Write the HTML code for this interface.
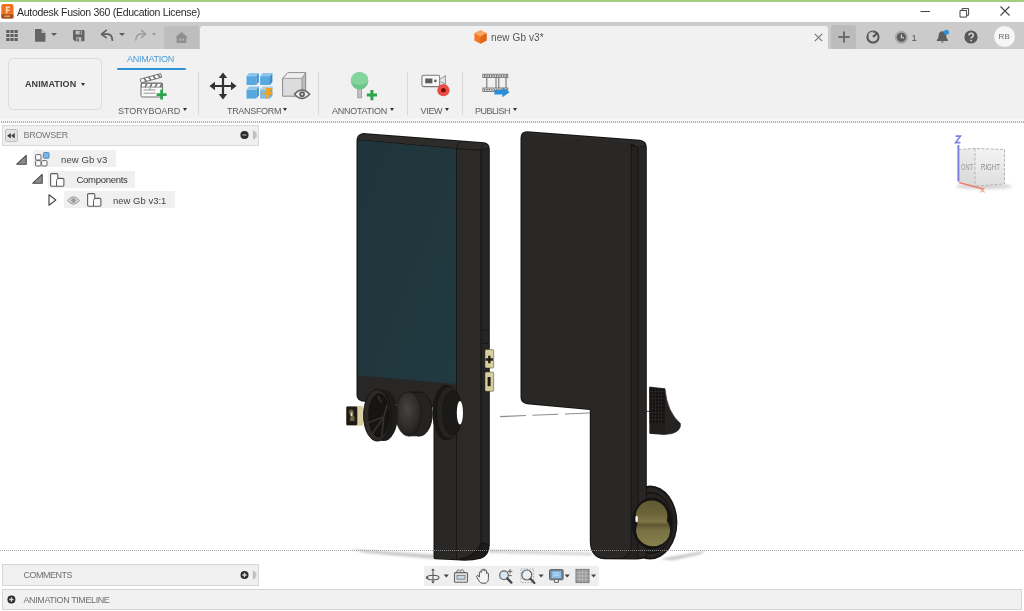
<!DOCTYPE html>
<html>
<head>
<meta charset="utf-8">
<title>Autodesk Fusion 360</title>
<style>
*{box-sizing:border-box;margin:0;padding:0}
html,body{width:1024px;height:611px;overflow:hidden;background:#fff;font-family:"Liberation Sans",sans-serif;}
#app{position:relative;width:1024px;height:611px;background:#fff;overflow:hidden}
.abs{position:absolute}
.t{position:absolute;white-space:nowrap;line-height:1;transform-origin:0 0;filter:blur(0.3px)}
svg{position:absolute;overflow:visible}
svg:not(#model){filter:blur(0.300px)}
#green{left:0;top:0;width:1024px;height:2px;background:#a3ce80}
#title{left:0;top:2px;width:1024px;height:20px;background:#fff}
#qat{left:0;top:21.600px;width:1024px;height:27.400px;background:#cbcbcb}
#tab{left:200.300px;top:25.500px;width:628.200px;height:23.500px;background:#f1f1f1;border-radius:3px 3px 0 0}
#home{left:163.600px;top:25.600px;width:35.800px;height:23.400px;background:#bebebe;border-radius:3px 3px 0 0}
#plus{left:830.600px;top:25.200px;width:25.600px;height:23.800px;background:#bcbcbc;border-radius:3px}
#ribbon{left:0;top:49px;width:1024px;height:69px;background:#f1f1f1}
#ribbon2{left:0;top:118px;width:1024px;height:6px;background:linear-gradient(#f3f3f3,#fafafa 3px,#fff 6px)}
#dots1{left:1px;top:120.900px;width:1023px;height:2.500px;background:repeating-linear-gradient(90deg,#b2b2b2 0 1px,#f7f7f7 1px 2px)}
#dots2{left:0;top:550.3px;width:1024px;height:1px;background:repeating-linear-gradient(90deg,rgba(150,150,150,.85) 0 1px,rgba(255,255,255,0) 1px 2px)}
#wsbtn{left:8px;top:58px;width:94px;height:52px;border:1px solid #dcdcdc;border-radius:5px;background:#f1f1f1}
.sep{position:absolute;top:72px;width:1px;height:43px;background:#d8d8d8}
.lbl{font-size:9px;color:#5c5c5c}
.car{position:absolute;width:0;height:0;border-left:2.700px solid transparent;border-right:2.700px solid transparent;border-top:3.200px solid #2e2e2e;margin:-0.400px 0 0 -0.200px}
.carq{position:absolute;width:0;height:0;border-left:3px solid transparent;border-right:3px solid transparent;border-top:3.6px solid #5a5a5a}
#bhead{left:2px;top:125px;width:257px;height:21px;background:#f0f0f0;border:1px solid #d9d9d9}
.chip{position:absolute;background:#f0f0f0;height:17px}
.tree{font-size:9.5px;color:#454545}
#bottom{left:0;top:588px;width:1024px;height:23px;background:#fff}
#comments{left:2px;top:564px;width:257px;height:22px;background:#f0f0f0;border:1px solid #d6d6d6}
#timeline{left:2px;top:589.400px;width:1019.800px;height:21.100px;background:#f1f1f1;border:1px solid #d4d4d4}
#nav{left:424px;top:566px;width:175px;height:20px;background:#efefef}
.pl{font-size:9px;color:#707070}
</style>
</head>
<body>
<div id="app">
  <div class="abs" id="green"></div>
  <div class="abs" id="title"></div>
  <div class="abs" id="qat"></div>
  <div class="abs" id="tab"></div>
  <div class="abs" id="home"></div>
  <div class="abs" id="plus"></div>
  <div class="abs" id="ribbon"></div>
  <div class="abs" id="ribbon2"></div>
  <div class="abs" id="dots1"></div>

  <!-- title text -->
  <div class="t" id="ttext" style="letter-spacing:-0.29px;left:17px;top:7.400px;font-size:10.5px;color:#2a2a2a">Autodesk Fusion 360 (Education License)</div>
  <div class="t" id="doc" style="letter-spacing:0.1px;left:491px;top:33px;font-size:10px;color:#555">new Gb v3*</div>
  <!-- app icon -->
  <svg style="left:1px;top:4px" width="13" height="15" viewBox="0 0 13 15">
    <rect x="0.3" y="0" width="12.2" height="14.5" rx="2" fill="#f26f21"/>
    <rect x="0.3" y="10.3" width="12.2" height="4.2" rx="1.2" fill="#a9511e"/>
    <path d="M4.8 2.5h4v1.4h-2.4v1.6h2v1.4h-2v2.3h-1.6z" fill="#ffd9b8"/>
    <rect x="3.5" y="11.6" width="5.5" height="1.2" fill="#e8b48e"/>
  </svg>
  <!-- grid -->
  <svg style="left:6px;top:30px" width="12" height="11" viewBox="0 0 12 11" fill="#5f5f5f">
    <rect x="0.3" y="0" width="3.2" height="3"/><rect x="4.4" y="0" width="3.2" height="3"/><rect x="8.5" y="0" width="3.2" height="3"/>
    <rect x="0.3" y="4" width="3.2" height="3"/><rect x="4.4" y="4" width="3.2" height="3"/><rect x="8.5" y="4" width="3.2" height="3"/>
    <rect x="0.3" y="8" width="3.2" height="3"/><rect x="4.4" y="8" width="3.2" height="3"/><rect x="8.5" y="8" width="3.2" height="3"/>
  </svg>
  <!-- file -->
  <svg style="left:35px;top:29px" width="11" height="13" viewBox="0 0 11 13">
    <path d="M0 0h6.4l4 4v8.8h-10.4z" fill="#656565"/><path d="M6.6 0.3v3.6h3.6z" fill="#bdbdbd"/>
  </svg>
  <div class="carq" style="left:50.8px;top:33.4px"></div>
  <!-- save -->
  <svg style="left:73.4px;top:29.8px" width="12" height="12" viewBox="0 0 12 12">
    <path d="M0 1q0-1 1-1h9.5q1 0 1 1v9.3q0 1-1 1h-8.5l-2-2z" fill="#636363"/>
    <rect x="2.6" y="0.8" width="6.2" height="3.6" fill="#c2c2c2"/>
    <rect x="6.6" y="1.3" width="1.4" height="2.5" fill="#636363"/>
    <rect x="3.3" y="7.3" width="5" height="4" fill="#c2c2c2"/>
    <rect x="4.2" y="8.3" width="1.6" height="3" fill="#636363"/>
  </svg>
  <!-- undo -->
  <svg style="left:101px;top:30px" width="13" height="11" viewBox="0 0 13 11">
    <path d="M5.2 0.4L0.6 4.2l4.6 3.4" fill="none" stroke="#616161" stroke-width="1.7" stroke-linejoin="round" stroke-linecap="round"/>
    <path d="M1.4 4.2h5.4q4.2 0.2 4.6 6" fill="none" stroke="#616161" stroke-width="1.8" stroke-linecap="round"/>
  </svg>
  <div class="carq" style="left:118.5px;top:33.2px"></div>
  <!-- redo -->
  <svg style="left:135px;top:30px" width="12" height="11" viewBox="0 0 12 11">
    <path d="M6.6 0.4l4.2 3.6l-4.2 3.4" fill="none" stroke="#9c9c9c" stroke-width="1.4" stroke-linejoin="round" stroke-linecap="round"/>
    <path d="M10.2 4h-5q-4 0.4-4.4 6" fill="none" stroke="#9c9c9c" stroke-width="1.4" stroke-linecap="round"/>
  </svg>
  <div class="carq" style="left:152px;top:33.2px;border-top-color:#9a9a9a;border-left-width:2.6px;border-right-width:2.6px"></div>
  <!-- home -->
  <svg style="left:174.5px;top:32px" width="13" height="11" viewBox="0 0 13 11">
    <path d="M6.5 0L13 5.4h-1.6v5.6h-9.8v-5.6h-1.6z" fill="#8f8f8f"/>
    <rect x="4" y="6.6" width="2" height="2" fill="#b5b5b5"/><rect x="7" y="6.6" width="2" height="2" fill="#b5b5b5"/>
  </svg>
  <!-- doc cube -->
  <svg style="left:473.5px;top:30px" width="13" height="14" viewBox="0 0 13 14">
    <path d="M6.5 0.2L12.6 3.2v7.2L6.5 13.8L0.4 10.4V3.2z" fill="#f07a22"/>
    <path d="M6.5 0.2L12.6 3.2L6.5 6.4L0.4 3.2z" fill="#f9a566"/>
    <path d="M6.5 6.4L12.6 3.2v7.2L6.5 13.8z" fill="#e0661a"/>
  </svg>
  <!-- tab close -->
  <svg style="left:814.300px;top:32.900px" width="9" height="9" viewBox="0 0 9 9"><path d="M0.8 0.8l7.4 7.4M8.2 0.8l-7.4 7.4" stroke="#7a7a7a" stroke-width="1.2"/></svg>
  <!-- plus -->
  <svg style="left:837.900px;top:30.800px" width="12" height="12" viewBox="0 0 12 12"><path d="M6 0.400v11.200M0.400 6h11.200" stroke="#6c6c6c" stroke-width="2"/></svg>
  <!-- extensions -->
  <svg style="left:866px;top:30px" width="14" height="14" viewBox="0 0 14 14">
    <circle cx="7" cy="7" r="5.6" fill="none" stroke="#555" stroke-width="2"/>
    <path d="M7 7L11 3.2" stroke="#555" stroke-width="2.2"/><path d="M2.4 4.6q2-2.6 4.6-2.6" stroke="#ccc" stroke-width="1.2" fill="none"/>
  </svg>
  <!-- job status -->
  <svg style="left:894px;top:30px" width="15" height="15" viewBox="0 0 15 15">
    <circle cx="7.4" cy="7.3" r="6.6" fill="#a9a9a9"/><circle cx="7.4" cy="7.3" r="4.6" fill="#5d5d5d"/>
    <path d="M7.4 4.4v3.2h2.6" stroke="#c8c8c8" stroke-width="1.2" fill="none"/>
  </svg>
  <div class="t" style="left:911.5px;top:33px;font-size:9.5px;color:#555">1</div>
  <!-- bell -->
  <svg style="left:936px;top:29px" width="14" height="15" viewBox="0 0 14 15">
    <path d="M6.4 2.2q3.6 0.2 3.8 4.4q0 3 1.8 4.4v1h-11.2v-1q1.8-1.4 1.8-4.4q0.2-4.2 3.8-4.4z" fill="#5e5e5e"/>
    <path d="M5 12.6q1.4 2.4 2.8 0z" fill="#5e5e5e"/>
    <circle cx="10.4" cy="3.2" r="2.5" fill="#2d8fd8"/>
  </svg>
  <!-- help -->
  <svg style="left:964px;top:30px" width="14" height="14" viewBox="0 0 14 14">
    <circle cx="7" cy="7" r="6.6" fill="#585858"/>
    <path d="M4.8 5.4q0.2-2.2 2.3-2.2t2.2 2q0 1.2-1.1 1.8t-1.1 1.6" stroke="#d2d2d2" stroke-width="1.5" fill="none"/><circle cx="7.1" cy="10.6" r="0.95" fill="#d2d2d2"/>
  </svg>
  <!-- avatar -->
  <div class="abs" style="left:993.5px;top:26px;width:21px;height:21px;border-radius:50%;background:#f6f6f6"></div>
  <div class="t" style="left:998.4px;top:33px;font-size:8px;color:#6a6a6a;letter-spacing:0.3px">RB</div>
  <!-- window controls -->
  <svg style="left:919px;top:5px" width="95" height="14" viewBox="0 0 95 14">
    <path d="M1.5 6.5h9.5" stroke="#444" stroke-width="1"/>
    <path d="M41 5.5h6.6v6.6h-6.6z M43 5.4v-1.8h6.6v6.6h-1.9" stroke="#444" stroke-width="1" fill="none"/>
    <path d="M81.5 1.5l9 9M90.5 1.5l-9 9" stroke="#444" stroke-width="1.1"/>
  </svg>
<!--ICONS_TOP_END-->
  <!-- ribbon -->
  <div class="abs" id="wsbtn"></div>
  <div class="t" id="ws" style="letter-spacing:0.1px;left:25px;top:80px;font-size:9px;font-weight:bold;color:#3c3c3c">ANIMATION</div>
  <div class="car" style="left:81.5px;top:83px"></div>
  <div class="t" id="tabl" style="letter-spacing:-0.25px;left:127px;top:54.5px;font-size:9px;color:#4a9bd8">ANIMATION</div>
  <div class="abs" style="left:117px;top:67.6px;width:69px;height:2.8px;background:#2b93d4;border-radius:1px"></div>
  <div class="t lbl" id="l1" style="letter-spacing:-0.05px;left:118px;top:106.5px">STORYBOARD</div><div class="car" style="left:183px;top:108.7px"></div>
  <div class="t lbl" id="l2" style="letter-spacing:-0.32px;left:227px;top:106.5px">TRANSFORM</div><div class="car" style="left:283.3px;top:108.7px"></div>
  <div class="t lbl" id="l3" style="letter-spacing:-0.26px;left:332px;top:106.5px">ANNOTATION</div><div class="car" style="left:390.3px;top:108.7px"></div>
  <div class="t lbl" id="l4" style="letter-spacing:-0.3px;left:420.5px;top:106.5px">VIEW</div><div class="car" style="left:445.5px;top:108.7px"></div>
  <div class="t lbl" id="l5" style="letter-spacing:-0.5px;left:475px;top:106.5px">PUBLISH</div><div class="car" style="left:512.7px;top:108.7px"></div>
  <div class="sep" style="left:198px"></div>
  <div class="sep" style="left:317.5px"></div>
  <div class="sep" style="left:406.5px"></div>
  <div class="sep" style="left:461.6px"></div>
  <!-- storyboard clapper -->
  <svg style="left:139px;top:73px" width="26" height="26" viewBox="0 0 26 26">
    <path d="M1.2 6.2L21.5 0.6l1.2 3.6L2.4 9.8z" fill="#fff" stroke="#6f6f6f" stroke-width="1"/>
    <path d="M5 5.2l2.4 3.2M9.6 3.9l2.4 3.2M14.2 2.7l2.4 3.2M18.8 1.4l2.4 3.2" stroke="#6f6f6f" stroke-width="1.6"/>
    <rect x="2" y="10" width="21.5" height="14" rx="1.2" fill="#fafafa" stroke="#6f6f6f" stroke-width="1"/>
    <rect x="2.5" y="10.5" width="20.5" height="3.6" fill="#fff" stroke="#6f6f6f" stroke-width="0.8"/>
    <path d="M6 14l2-3.4M11 14l2-3.4M16 14l2-3.4M21 14l2-3.4" stroke="#6f6f6f" stroke-width="1.5"/>
    <path d="M4.5 17h12M4.5 20.2h12M11 15v2" stroke="#8a8a8a" stroke-width="0.9"/>
    <path d="M22.6 16.6v10M17.6 21.6h10" stroke="#2ea350" stroke-width="2.8"/>
  </svg>
  <!-- move -->
  <svg style="left:209px;top:72px" width="28" height="28" viewBox="0 0 28 28">
    <path d="M14 3v22M3 14h22" stroke="#333" stroke-width="2.2"/>
    <path d="M14 0.4l4.2 5.6h-8.4zM14 27.6l4.2-5.6h-8.4zM0.4 14l5.6-4.2v8.4zM27.6 14l-5.6-4.2v8.4z" fill="#333"/>
  </svg>
  <!-- blue cubes -->
  <svg style="left:245.5px;top:72px" width="28" height="28" viewBox="0 0 28 28">
    <g transform="translate(0 0)">
      <path d="M0.5 4.2L3 1h9.8l-2.4 3.2z" fill="#8cc6ec"/>
      <path d="M10.4 4.2L12.8 1v9l-2.4 3z" fill="#3a8fcb"/>
      <rect x="0.5" y="4.2" width="9.9" height="8.8" fill="#56a8de"/>
    </g>
    <g transform="translate(13.6 0)">
      <path d="M0.5 4.2L3 1h9.8l-2.4 3.2z" fill="#8cc6ec"/>
      <path d="M10.4 4.2L12.8 1v9l-2.4 3z" fill="#3a8fcb"/>
      <rect x="0.5" y="4.2" width="9.9" height="8.8" fill="#56a8de"/>
    </g>
    <g transform="translate(0 13.6)">
      <path d="M0.5 4.2L3 1h9.8l-2.4 3.2z" fill="#8cc6ec"/>
      <path d="M10.4 4.2L12.8 1v9l-2.4 3z" fill="#3a8fcb"/>
      <rect x="0.5" y="4.2" width="9.9" height="8.8" fill="#56a8de"/>
    </g>
    <g transform="translate(13.6 13.6)" opacity="0.75">
      <path d="M0.5 4.2L3 1h9.8l-2.4 3.2z" fill="#8cc6ec"/>
      <path d="M10.4 4.2L12.8 1v9l-2.4 3z" fill="#3a8fcb"/>
      <rect x="0.5" y="4.2" width="9.9" height="8.8" fill="#56a8de"/>
    </g>
    <path d="M15 21.5l5.5-1.5l-1-4.6l7.6 1.2l-3.2 2.8l3.4 1.2l-7.8 6.6l0.9-4.6z" fill="#f4a31f"/>
  </svg>
  <!-- gray cube with eye -->
  <svg style="left:282px;top:72px" width="29" height="28" viewBox="0 0 29 28">
    <path d="M0.6 6.4L6 0.6h17.6v18l-3.6 5.6H0.6z" fill="#dcdcdc" stroke="#8a8a8a" stroke-width="1"/>
    <path d="M20 6.4L23.6 0.6v18L20 24.2z" fill="#bdbdbd" stroke="#8a8a8a" stroke-width="0.8"/>
    <path d="M0.6 6.4L6 0.6h17.6L20 6.4z" fill="#eee" stroke="#8a8a8a" stroke-width="0.8"/>
    <path d="M12.6 22.2q7-8.4 15 0q-8 8.4-15 0z" fill="#f0f0f0" stroke="#666" stroke-width="1.6"/>
    <circle cx="20.1" cy="22.2" r="2.9" fill="#666"/><circle cx="20.1" cy="22.2" r="1" fill="#eee"/>
  </svg>
  <!-- annotation pin -->
  <svg style="left:349px;top:71px" width="30" height="30" viewBox="0 0 30 30">
    <rect x="8.8" y="17" width="3.6" height="9.8" fill="#c4c4c4" stroke="#8e8e8e" stroke-width="0.8"/>
    <circle cx="10.6" cy="9.8" r="8.8" fill="#6ec68c"/>
    <path d="M1.8 9.8a8.8 8.8 0 0 1 17.6 0q-1.6 3.8-8.8 4q-7.200-0.200-8.800-4z" fill="#84d49d"/>
    <path d="M22.900 19v10.2M17.800 24.100h10.200" stroke="#2ea350" stroke-width="3"/>
  </svg>
  <!-- view camera -->
  <svg style="left:421px;top:74px" width="30" height="24" viewBox="0 0 30 24">
    <rect x="0.9" y="1.2" width="17.8" height="11.400" rx="1.8" fill="#f6f6f6" stroke="#7a7a7a" stroke-width="1.1"/>
    <rect x="4.200" y="4.500" width="7.200" height="4.800" fill="#5c5c5c"/><circle cx="14.400" cy="6.900" r="1.3" fill="#5c5c5c"/>
    <path d="M19.400 5.200L24.400 1.600v8.400l-5-2.400" fill="#e6e6e6" stroke="#8a8a8a" stroke-width="0.9"/>
    <circle cx="22.400" cy="16.200" r="6.100" fill="#e84c43"/><circle cx="22.400" cy="16.200" r="2.300" fill="#7c0d0a"/>
  </svg>
  <!-- publish film -->
  <svg style="left:482px;top:73px" width="30" height="26" viewBox="0 0 30 26">
    <rect x="0.800" y="1.200" width="25" height="3.400" fill="#d8d8d8" stroke="#6a6a6a" stroke-width="0.8"/>
    <rect x="0.800" y="15" width="25" height="3.400" fill="#d8d8d8" stroke="#6a6a6a" stroke-width="0.8"/>
    <path d="M2 2.900h23M2 16.700h23" stroke="#6a6a6a" stroke-width="1.600" stroke-dasharray="1.200 1.200"/>
    <path d="M4.800 4.600v10.400M14 4.600v10.400M16.800 4.600v10.400M24 4.600v10.400" stroke="#6a6a6a" stroke-width="1"/>
    <path d="M12.400 17h8v-2.800l7.200 5l-7.200 5v-2.800h-8z" fill="#2b8fd8"/>
  </svg>
<!--ICONS_RIBBON_END-->
  <!-- viewport -->
  <svg class="abs" id="model" style="left:0;top:126px" width="1024" height="462" viewBox="0 126 1024 462">
    <defs>
      <linearGradient id="gScreen" x1="0" y1="0" x2="1" y2="1">
        <stop offset="0" stop-color="#1f353c"/><stop offset="1" stop-color="#213940"/>
      </linearGradient>
      <linearGradient id="gBrass" gradientUnits="userSpaceOnUse" x1="0" y1="500.500" x2="0" y2="546.500">
        <stop offset="0" stop-color="#5f5832"/><stop offset="0.300" stop-color="#6d6439"/><stop offset="0.460" stop-color="#7d7447"/><stop offset="0.530" stop-color="#5e5631"/><stop offset="0.640" stop-color="#777041"/><stop offset="1" stop-color="#8a8150"/>
      </linearGradient>
      <radialGradient id="gKnob" cx="0.45" cy="0.4" r="0.6">
        <stop offset="0" stop-color="#474542"/><stop offset="0.700" stop-color="#2e2c2a"/><stop offset="1" stop-color="#1f1e1c"/>
      </radialGradient>
      <filter id="soft" color-interpolation-filters="sRGB"><feGaussianBlur stdDeviation="0.45"/></filter>
      <filter id="shadow" color-interpolation-filters="sRGB" x="-20%" y="-100%" width="140%" height="300%"><feGaussianBlur stdDeviation="1"/></filter>
    </defs>
    <!-- ground shadows -->
    <g filter="url(#shadow)" opacity="0.800">
      <path d="M350 549 L434 554.500 L434 559 L366 553 Z" fill="#bcbcbc"/>
      <path d="M489 549.500 L592 552.500 L592 555.500 L489 553 Z" fill="#cccccc"/>
      <path d="M660 559 L672 556.500 L706 550.500 L700 554.500 L672 560.500 Z" fill="#bdbdbd"/>
    </g>
    <g filter="url(#soft)">
    <!-- ===== left body ===== -->
    <!-- ring behind right-body? no. left top face -->
    <path d="M356.5 141 Q356.5 134 363 133 L484 142.3 Q489.5 143 489.8 149 L489.800 545 Q489.500 555.500 481 558.800 Q470 561.500 456 560.300 L435 559.300 Q433.500 559.200 433.500 557.500 L433.500 407.500 L362 401.5 Q356.5 400 356.5 395 Z" fill="#141312"/>
    <!-- top face -->
    <path d="M357.5 139.5 Q358 134.5 363 134 L484 143.2 Q488 144 488.8 148 L481 150 L456 148.600 Z" fill="#2d2c2a"/>
    <path d="M358 140.200 L456 148.800 L481 150.300 L489 148.300 M456.500 148.800 Q456.800 144 461 141.500 M481 150.300 Q481 146 484 143.500" stroke="#121110" stroke-width="0.900" fill="none"/>
    <!-- front face dark (lower) -->
    <path d="M357.5 140 L456 148.8 L456 559.300 L435.500 558.400 Q434.500 558.300 434.500 557 L434.500 407 L362 400.5 Q357.500 399.500 357.500 395 Z" fill="#282725"/>
    <!-- screen -->
    <path d="M358.2 140.3 L456 148.9 L456 384 L358.2 375.3 Z" fill="url(#gScreen)"/>
    <!-- side face -->
    <path d="M456.800 149 L480.500 150.500 L480.500 542.500 Q477 555 456.800 559.300 Z" fill="#2b2a28"/>
    <path d="M481.600 150.500 L488.800 148.500 L488.800 544 L481.600 542 Z" fill="#262523"/>
    <path d="M481.600 543 L488.800 545 Q488.500 554.500 480.500 557.800 Q472 560 462 559.600 Q478 555 481.600 543 Z" fill="#1c1b1a"/>
    <!-- side slot -->
    <path d="M481.500 330.300 L488.800 330.300 M481.500 343.400 L488.800 343.400" stroke="#131211" stroke-width="0.800" fill="none"/>
    <!-- side buttons (cream) -->
    <rect x="485" y="349.600" width="8.700" height="18.400" rx="1.200" fill="#d8cf9e" stroke="#3a3828" stroke-width="0.500"/>
    <rect x="485" y="372" width="8.700" height="19.300" rx="1.200" fill="#d8cf9e" stroke="#3a3828" stroke-width="0.500"/>
    <path d="M485.500 358.200h2.600v-2.400h2.400v2.400h2.400v2.600h-2.400v2.400h-2.400v-2.400h-2.600z" fill="#1e1d1b"/>
    <rect x="487.600" y="377" width="3" height="9.200" fill="#1e1d1b"/>
    <!-- left small button -->
    <rect x="346.300" y="406" width="16.600" height="19.800" rx="1.500" fill="#d9d0a0"/>
    <rect x="346.300" y="406.600" width="11" height="18.600" rx="1.200" fill="#1c1b19"/>
    <path d="M349 410.500q2.500-2 4.500 0.500v3q-1 1.500 1 3v4h-4.500v-3q1.500-1.500-0.500-3.500z" fill="#6d663f"/>
    <rect x="350.800" y="412.500" width="1.600" height="3.500" fill="#e6dfb8"/>
    <!-- knob 3 : socket ring -->
    <ellipse cx="446" cy="412.600" rx="13.600" ry="27.800" fill="#191817"/>
    <ellipse cx="449" cy="412.600" rx="12.500" ry="26.200" fill="#252321" stroke="#111" stroke-width="0.700"/>
    <ellipse cx="452.300" cy="412.600" rx="9.800" ry="22" fill="#1b1a18" stroke="#121110" stroke-width="0.600"/>
    <ellipse cx="459.900" cy="412.700" rx="3.100" ry="11.700" fill="#fff"/>
    <!-- knob 2: drum -->
    <rect x="393" y="406.500" width="8" height="13" rx="2" fill="#1e1d1b"/>
    <ellipse cx="419.500" cy="414" rx="12.700" ry="22" fill="#242321" stroke="#121110" stroke-width="0.900"/>
    <rect x="408.500" y="392.200" width="11" height="43.600" fill="#242321"/>
    <path d="M408.500 392.200h11M408.500 435.800h11" stroke="#121110" stroke-width="0.900"/>
    <ellipse cx="408.600" cy="414" rx="12.700" ry="22" fill="url(#gKnob)" stroke="#1a1918" stroke-width="0.800"/>
    <!-- knob 1: encoder wheel -->
    <ellipse cx="383.600" cy="415.300" rx="14.200" ry="25.800" fill="#1d1c1a"/>
    <ellipse cx="377.300" cy="415.300" rx="13.800" ry="25.800" fill="#2c2a28" stroke="#100f0e" stroke-width="0.900"/>
    <ellipse cx="379" cy="415.300" rx="10.400" ry="21.600" fill="#161514" stroke="#0f0e0d" stroke-width="0.700"/>
    <path d="M383.800 416.800L366.700 423.200M383.800 416.800L371.700 434.600M383.800 416.800L381.900 436M383.800 416.800L387 405.400M378 396.500l3.500 6" stroke="#32302e" stroke-width="1.700" fill="none" stroke-linecap="round"/>
    <!-- ===== right body ===== -->
    <!-- brass ring behind -->
    <ellipse cx="650" cy="522.500" rx="27.400" ry="37" fill="#181716"/>
    <ellipse cx="650" cy="522.500" rx="25.800" ry="35" fill="#272624"/>
    <ellipse cx="650.500" cy="523" rx="23" ry="31" fill="#141312"/>
    <ellipse cx="651" cy="523" rx="21.800" ry="29.400" fill="#252422"/>
    <path d="M520.5 138 Q520.5 131.5 527 131.2 L640 139.8 Q646.8 141 646.8 147 L646.800 556 Q644 559.500 636 559.600 L604 559.300 Q590.500 558 589.800 542 L589.800 410 L527 404.2 Q520.5 403 520.5 397 Z" fill="#131211"/>
    <!-- top face -->
    <path d="M522 136 Q523 132.5 527 132.3 L640 140.8 Q645 142 645.8 146 L638 147 L631 143.500 Z" fill="#2c2b29"/>
    <!-- front face -->
    <path d="M521.5 137 Q522 134 525 134.2 L628 142.6 Q630.8 143.2 630.8 146 L630.800 546 Q630 556.500 620 558 L604 558 Q591.500 556.500 590.800 542 L590.800 409.200 L527 403.300 Q521.500 402 521.500 397 Z" fill="#292826"/>
    <!-- side faces -->
    <path d="M631.600 146 L637.600 147.500 L637.600 558.500 L621 558.800 Q630.500 556.500 631.600 546 Z" fill="#242220"/>
    <path d="M638.500 147.500 L645.800 146.500 L645.800 556 L638.500 558.300 Z" fill="#292725"/>
    <!-- brass -->
    <clipPath id="cpR"><rect x="632.300" y="470" width="60" height="100"/></clipPath>
    <g clip-path="url(#cpR)">
      <ellipse cx="652" cy="523.500" rx="20.300" ry="26" fill="#151413"/>
    </g>
    <ellipse cx="651.600" cy="516.200" rx="15.800" ry="15.700" fill="url(#gBrass)"/>
    <ellipse cx="653.100" cy="530.300" rx="17" ry="16" fill="url(#gBrass)"/>
    
    <ellipse cx="636.600" cy="519" rx="1.200" ry="3.200" fill="#fff"/>
    <!-- trigger -->
    <path d="M646.500 411.400h3.500" stroke="#222" stroke-width="0.800"/>
    <path d="M649.500 387 L665 388.700 Q667 412 680.400 423.500 Q681.500 430.500 672 433.600 L664.400 434.600 L649.800 433.400 Z" fill="#252422" stroke="#141312" stroke-width="0.600"/>
    <path d="M649.800 387.400 L664.700 389 L664.700 434.300 L649.800 433.200 Z" fill="#1f1e1c"/>
    <path d="M649.800 387.400 L664.700 389 L664.700 423 L649.800 423 Z" fill="#131211"/>
    <path d="M650 391.500h14.600M650 395h14.600M650 398.500h14.600M650 402h14.600M650 405.500h14.600M650 409h14.600M650 412.500h14.600M650 416h14.600M650 419.500h14.600" stroke="#2c2a28" stroke-width="0.700"/>
    <path d="M652.600 388v35M655.600 388v35M658.600 388.500v34.500M661.600 388.500v34.500" stroke="#2c2a28" stroke-width="0.700"/>
    <!-- explode line -->
    <path d="M500 416.6 L590 413" stroke="#8d8d8d" stroke-width="1.1" stroke-dasharray="26 6.5"/>
    </g>
  </svg>
  <div class="abs" id="dots2"></div>
  <svg style="left:940px;top:130px" width="84" height="70" viewBox="940 130 84 70">
    <defs>
      <linearGradient id="vcR" x1="0" y1="0" x2="0" y2="1"><stop offset="0" stop-color="#f4f4f4"/><stop offset="1" stop-color="#dedede"/></linearGradient>
      <linearGradient id="vcF" x1="0" y1="0" x2="0" y2="1"><stop offset="0" stop-color="#ececec"/><stop offset="1" stop-color="#d8d8d8"/></linearGradient>
      <filter id="vcb" color-interpolation-filters="sRGB"><feGaussianBlur stdDeviation="0.550"/></filter>
      <filter id="vcs" color-interpolation-filters="sRGB" x="-20%" y="-200%" width="140%" height="500%"><feGaussianBlur stdDeviation="1.800"/></filter>
    </defs>
    <ellipse cx="984" cy="186.500" rx="28" ry="2.400" fill="#bdbdbd" opacity="0.700" filter="url(#vcs)"/>
    <g filter="url(#vcb)">
      <path d="M958.500 149.500L975 148.500V186L958.500 181.500z" fill="url(#vcF)"/>
      <path d="M975 148.500L1004.500 149.500V184L975 186z" fill="url(#vcR)"/>
      <path d="M958.500 149.500L975 148.500L1004.500 149.500M1004.500 149.500V184L975 186M975 148.500V186" fill="none" stroke="#b4b4b4" stroke-width="1" stroke-dasharray="3 1.600"/>
      <path d="M958.400 145v36.500" stroke="#7f7fe0" stroke-width="2"/>
      <path d="M959 182.500L983 189" stroke="#e9826c" stroke-width="1.800"/>
      <path d="M980.500 187.500l4 5M984.500 187.500l-4 5" stroke="#ee8f7a" stroke-width="1.100"/>
      <path d="M955.600 136.200h4.800l-4.800 6.400h4.800" stroke="#8080e0" stroke-width="1.700" fill="none"/>
    </g>
    <text x="981" y="170" font-family="Liberation Sans, sans-serif" font-size="9.800" fill="#8c8c8c" filter="url(#vcb)" textLength="19" lengthAdjust="spacingAndGlyphs">RIGHT</text>
    <text x="961" y="170.300" font-family="Liberation Sans, sans-serif" font-size="9.800" fill="#9a9a9a" filter="url(#vcb)" textLength="12" lengthAdjust="spacingAndGlyphs">ONT</text>
  </svg>
<!--VIEWCUBE_END-->
  <!-- browser -->
  <div class="abs" id="bhead"></div>
  <div class="t" id="br" style="letter-spacing:-0.3px;left:23.5px;top:130.6px;font-size:9px;color:#777">BROWSER</div>
  <div class="chip" style="left:33px;top:150px;width:83px"></div>
  <div class="chip" style="left:47.5px;top:170.5px;width:87px"></div>
  <div class="chip" style="left:64px;top:191px;width:111px"></div>
  <div class="t tree" id="t1" style="letter-spacing:0.1px;left:61px;top:154.5px">new Gb v3</div>
  <div class="t tree" id="t2" style="letter-spacing:-0.29px;left:76.5px;top:175px;color:#333">Components</div>
  <div class="t tree" id="t3" style="left:113px;top:195.5px">new Gb v3:1</div>
  <!-- collapse btn -->
  <div class="abs" style="left:4.5px;top:128.5px;width:13px;height:13.5px;background:#e2e2e2;border:1px solid #bdbdbd;border-radius:1.5px"></div>
  <svg style="left:7px;top:132.6px" width="8" height="6" viewBox="0 0 8 6"><path d="M3.800 0v5.600L0.200 2.800zM7.700 0v5.600L4.100 2.800z" fill="#3a3a3a"/></svg>
  <!-- header circle + handle -->
  <svg style="left:240px;top:130px" width="19" height="10" viewBox="0 0 19 10">
    <circle cx="4.500" cy="5" r="4.100" fill="#2c2c2c"/><rect x="2.400" y="4.300" width="4.200" height="1.400" fill="#9a9a9a"/>
    <path d="M13.800 0.600l3 2.400v4l-3 2.400z" fill="#c2c2c2"/><path d="M13.600 0.600v8.800" stroke="#aaa" stroke-width="0.800"/>
  </svg>
  <!-- row1 -->
  <svg style="left:16px;top:154.600px" width="11" height="10" viewBox="0 0 11 10"><path d="M10.200 0.400v8.800H0.800z" fill="#8c8c8c" stroke="#4a4a4a" stroke-width="1.100" stroke-linejoin="round"/></svg>
  <svg style="left:35px;top:151.500px" width="15" height="15" viewBox="0 0 15 15">
    <rect x="0.600" y="2.600" width="5.400" height="5.400" rx="0.800" fill="#fafafa" stroke="#666" stroke-width="1"/>
    <rect x="0.600" y="8.600" width="5.400" height="5.400" rx="0.800" fill="#fafafa" stroke="#666" stroke-width="1"/>
    <rect x="6.600" y="8.600" width="5.400" height="5.400" rx="0.800" fill="#fafafa" stroke="#666" stroke-width="1"/>
    <rect x="8.400" y="0.600" width="5.600" height="5.600" rx="0.800" fill="#7db7e6" stroke="#4a86bd" stroke-width="1"/>
  </svg>
  <!-- row2 -->
  <svg style="left:31.500px;top:174.400px" width="11" height="10" viewBox="0 0 11 10"><path d="M10.200 0.400v8.800H0.800z" fill="#8c8c8c" stroke="#4a4a4a" stroke-width="1.100" stroke-linejoin="round"/></svg>
  <svg style="left:50px;top:172.600px" width="15" height="14" viewBox="0 0 15 14" id="cmp">
    <path d="M1.700 0.600h5q1.100 0 1.100 1.100v3.700h5q1.100 0 1.100 1.100v5.600q0 1.100-1.100 1.100h-11.100q-1.100 0-1.100-1.100v-10.400q0-1.100 1.100-1.100z" fill="#fbfbfb" stroke="#5e5e5e" stroke-width="1.100"/>
    <path d="M6.500 13v-5.400q0-1.600 1.600-2" fill="none" stroke="#5e5e5e" stroke-width="1"/>
  </svg>
  <!-- row3 -->
  <svg style="left:47.500px;top:194.300px" width="9" height="12" viewBox="0 0 9 12"><path d="M1 0.800l6.800 5.200l-6.800 5.200z" fill="#fff" stroke="#4a4a4a" stroke-width="1.200" stroke-linejoin="round"/></svg>
  <svg style="left:66.500px;top:195.600px" width="13" height="9" viewBox="0 0 13 9">
    <path d="M0.500 4.500q6-7.400 12 0q-6 7.400-12 0z" fill="#d4d4d4" stroke="#9a9a9a" stroke-width="1"/><circle cx="6.500" cy="4.500" r="2.300" fill="#9a9a9a"/>
  </svg>
  <svg style="left:87px;top:192.800px" width="15" height="14" viewBox="0 0 15 14">
    <path d="M1.700 0.600h5q1.100 0 1.100 1.100v3.700h5q1.100 0 1.100 1.100v5.600q0 1.100-1.100 1.100h-11.100q-1.100 0-1.100-1.100v-10.400q0-1.100 1.100-1.100z" fill="#fbfbfb" stroke="#5e5e5e" stroke-width="1.100"/>
    <path d="M6.500 13v-5.400q0-1.600 1.600-2" fill="none" stroke="#5e5e5e" stroke-width="1"/>
  </svg>
<!--ICONS_BROWSER_END-->
  <!-- bottom -->
  <div class="abs" id="bottom"></div>
  <div class="abs" id="comments"></div>
  <div class="abs" id="timeline"></div>
  <div class="abs" id="nav"></div>
  <div class="t pl" id="cm" style="letter-spacing:-0.5px;left:23.5px;top:570.6px">COMMENTS</div>
  <div class="t pl" id="tl" style="letter-spacing:-0.4px;left:23.5px;top:595.5px">ANIMATION TIMELINE</div>
  <!-- comments circle+handle -->
  <svg style="left:239.500px;top:570.300px" width="19" height="10" viewBox="0 0 19 10">
    <circle cx="4.500" cy="5" r="4" fill="#2c2c2c"/><path d="M2.300 5h4.400M4.500 2.800v4.400" stroke="#d8d8d8" stroke-width="1.300"/>
    <path d="M13.600 0.600l2.800 2.400v4l-2.800 2.400z" fill="#c4c4c4"/><path d="M13.400 0.600v8.800" stroke="#aaa" stroke-width="0.800"/>
  </svg>
  <svg style="left:6.500px;top:595.400px" width="9" height="9" viewBox="0 0 9 9">
    <circle cx="4.400" cy="4.500" r="4" fill="#2c2c2c"/><path d="M2.200 4.500h4.400M4.400 2.300v4.400" stroke="#d8d8d8" stroke-width="1.300"/>
  </svg>
  <!-- nav bar icons -->
  <svg style="left:424px;top:566px" width="176" height="20" viewBox="424 566 176 20">
    <!-- orbit -->
    <g stroke="#555" fill="none" stroke-width="1.100">
      <path d="M433 569v14"/><ellipse cx="433" cy="577.500" rx="6" ry="2.300"/>
      <path d="M433 568.400l-1.800 2.200h3.600zM433 583.600l-1.800-2.200h3.600z" fill="#555" stroke="none"/>
      <path d="M426.200 576.200l2.600 1.600l-2.800 1.200z" fill="#555" stroke="none"/>
    </g>
    <path d="M443.700 574.400h5.200l-2.600 3z" fill="#444"/>
    <!-- look at -->
    <rect x="454.500" y="572.600" width="13" height="9.600" rx="1" fill="#e2e2e2" stroke="#666" stroke-width="1.100"/>
    <rect x="457" y="575.600" width="8" height="3.600" fill="#c9d6e4" stroke="#777" stroke-width="0.800"/>
    <path d="M456 572.400l2.400-2.800l1.600 1.800l2.200-2l2.400 3" fill="none" stroke="#666" stroke-width="1"/>
    <!-- hand -->
    <path d="M479.400 577.200v-4.600q0-1 0.900-1t0.900 1v-2q0-1 0.900-1t0.900 1v-0.600q0-1 0.900-1t0.900 1v1.200q0-1 0.900-1t0.900 1v2.400q0-0.800 0.900-0.800t0.900 1v4.600q0 4.600-3.400 4.800h-3q-1.800-0.200-2.800-2l-2.400-4q-0.600-1.200 0.300-1.600t1.700 0.600z" fill="#f4f4f4" stroke="#555" stroke-width="1"/>
    <!-- zoom -->
    <circle cx="504" cy="575.200" r="4.300" fill="#dbe8f4" stroke="#666" stroke-width="1.200"/>
    <path d="M507.200 578.400l4.200 4.200" stroke="#444" stroke-width="2.200" stroke-linecap="round"/>
    <path d="M510 569v4.600M507.700 571.300h4.600M508.200 575.600h3.600" stroke="#555" stroke-width="0.900"/>
    <!-- zoom window -->
    <rect x="521" y="569" width="12.600" height="13.600" fill="none" stroke="#999" stroke-width="0.900" stroke-dasharray="1.400 1.400"/>
    <circle cx="526.800" cy="575" r="5" fill="#e6eef6" stroke="#666" stroke-width="1.200"/>
    <path d="M530.400 578.800l4 4.200" stroke="#444" stroke-width="2.200" stroke-linecap="round"/>
    <path d="M538.500 574.400h5.200l-2.600 3z" fill="#444"/>
    <!-- display -->
    <rect x="549.500" y="569.600" width="13.600" height="10.200" rx="1" fill="#7d8791" stroke="#5c646c" stroke-width="1"/>
    <rect x="551.600" y="571.400" width="9.400" height="6.600" fill="#8cc3ec"/>
    <path d="M553.600 573h5.400M553.600 575.400h5.400" stroke="#b8dcf5" stroke-width="1"/>
    <path d="M554.400 580v2.400h4v-2.400" fill="#eee" stroke="#666" stroke-width="1"/>
    <path d="M564.600 574.400h5.200l-2.600 3z" fill="#444"/>
    <!-- grid -->
    <rect x="576" y="569.400" width="13" height="13.200" fill="#9a9a9a" stroke="#777" stroke-width="1"/>
    <path d="M579.200 569.400v13.200M582.500 569.400v13.200M585.800 569.400v13.200M576 572.700h13M576 576h13M576 579.300h13" stroke="#c2c2c2" stroke-width="0.700"/>
    <path d="M591 574.400h5.200l-2.600 3z" fill="#444"/>
  </svg>
<!--ICONS_BOTTOM_END-->
</div>
</body>
</html>
